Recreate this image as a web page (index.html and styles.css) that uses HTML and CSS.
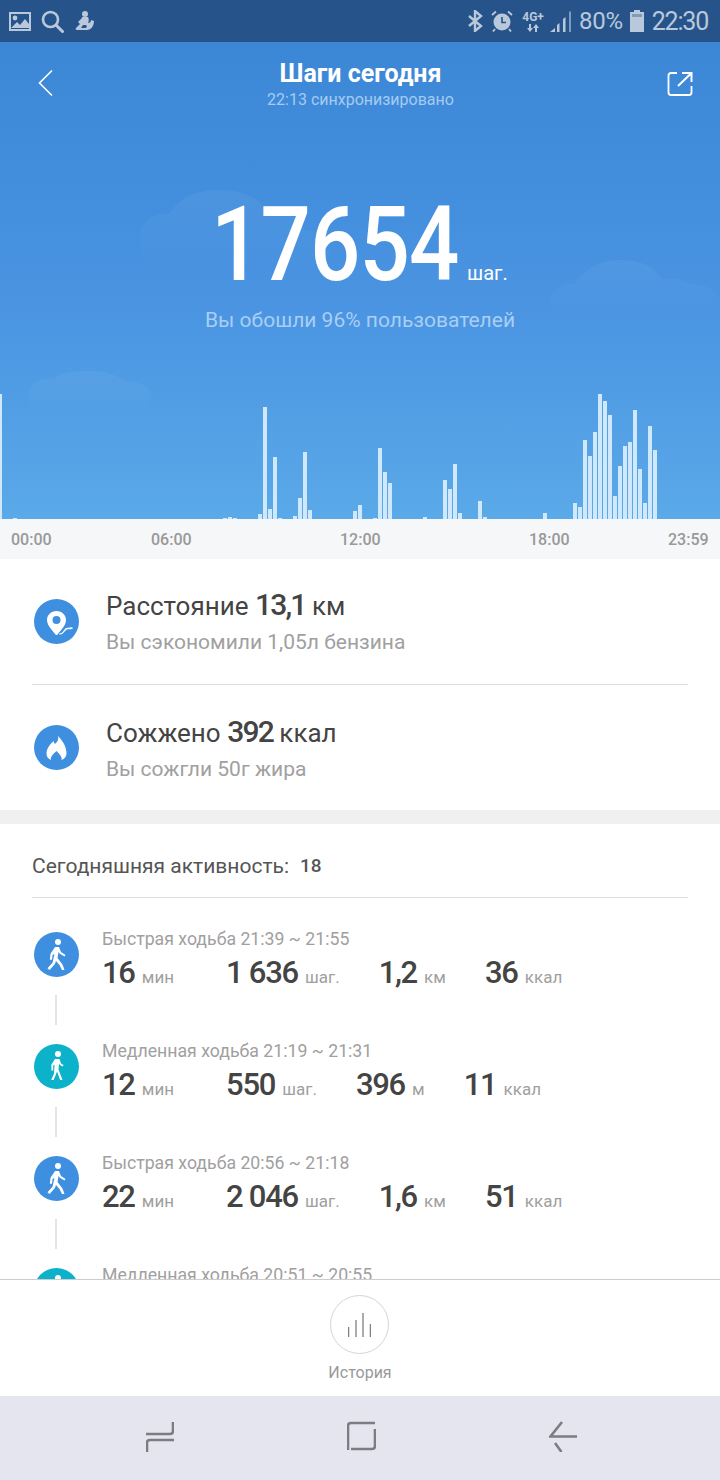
FILE: index.html
```html
<!DOCTYPE html>
<html lang="ru">
<head>
    <meta charset="UTF-8">
    <title>Шаги сегодня</title>
    <link rel="stylesheet" href="styles.css">
</head>
<body>
<div class="phone">
    <div class="status-bar">
        <div class="status-group">
            <svg class="st-icon" width="22" height="20" viewBox="0 0 22 20"><path fill="#b9c8db" fill-rule="evenodd" d="M0 1h22v19H0zM2 3v15h18V3z"/><path fill="#b9c8db" d="M2 17l6-6 3 3 5-6 4 5v4H2z"/><circle cx="6" cy="7" r="2.4" fill="#b9c8db"/></svg>
            <svg class="st-icon st-search" width="23" height="23" viewBox="0 0 23 23"><circle cx="9.500" cy="9.500" r="7.500" fill="none" stroke="#b9c8db" stroke-width="2.600"/><path d="M15 15l6.500 6.500" stroke="#b9c8db" stroke-width="3" stroke-linecap="round"/></svg>
            <svg class="st-icon st-figure" width="19" height="20" viewBox="0 0 19 20"><circle cx="10" cy="3" r="3" fill="#b9c8db"/><path fill="#b9c8db" fill-rule="evenodd" d="M7 6h6c1 2 1 4 0 6 2 0 3-1 3-3l3 1c0 5-3 9-7 9H2c-1 0-2-1-1-2l4-4-2-2 3-3c1-1 1-1 1-2zm1 8l-2 3h5c1-1 1-2 0-3z"/></svg>
        </div>
        <div class="status-group">
            <svg class="st-icon st-bt" width="15" height="22" viewBox="0 0 15 22"><path d="M1 6l12 10-6 5V1l6 5L1 16" fill="none" stroke="#b9c8db" stroke-width="2.400"/></svg>
            <svg class="st-icon st-alarm" width="22" height="22" viewBox="0 0 22 22"><circle cx="11" cy="12" r="8.500" fill="#b9c8db"/><path d="M11 7v5.500h4" fill="none" stroke="#26548a" stroke-width="1.600"/><path d="M1 5l4-3.500M21 5l-4-3.500M4 19l-2 2.500M18 19l2 2.500" stroke="#b9c8db" stroke-width="1.800"/></svg>
            <div class="st-net">
                4G+
                <svg class="st-arrows" width="14" height="8" viewBox="0 0 14 8"><path fill="#b9c8db" d="M3 0h2v4h2L4 8 1 4h2zM9 8h2V4h2l-3-4-3 4h2z"/></svg>
            </div>
            <svg class="st-icon st-signal" width="21" height="21" viewBox="0 0 21 21"><path fill="#b9c8db" d="M0 21l5-4v4zM7 14l2.500-2v9H7zM13 8l2.500-2v15H13z"/><path fill="#7f9bbd" d="M19 1l2-1v21h-2z"/></svg>
            <span class="st-percent">80%</span>
            <svg class="st-icon st-battery" width="14" height="22" viewBox="0 0 14 22"><path fill="#b9c8db" d="M4 0h6v2h4v20H0V2h4z"/><path fill="#7f9bbd" d="M2 4h10v3H2z"/></svg>
            <span class="st-time">22:30</span>
        </div>
    </div>

    <div class="content">
        <section class="hero">
            <!-- clouds behind the number -->
            <svg class="cloud cloud-a" width="190" height="80" viewBox="0 0 190 80">
                <defs>
                    <linearGradient id="cloud-fade" x1="0" y1="0" x2="0" y2="1">
                        <stop offset="0" stop-color="#fff" stop-opacity=".05"/>
                        <stop offset="1" stop-color="#fff" stop-opacity="0"/>
                    </linearGradient>
                </defs>
                <path fill="url(#cloud-fade)" d="M0 48c0-16 14-26 30-24 8-16 26-24 50-24 22 0 38 8 46 20 6-2 14-2 20 0 10 4 16 12 18 20 14 2 26 10 26 24 0 10-6 16-14 16H18C6 80 0 62 0 48z"/>
            </svg>
            <svg class="cloud cloud-b" width="170" height="60" viewBox="0 0 170 60"><path fill="url(#cloud-fade)" d="M0 42c0-12 12-20 26-18 6-14 24-24 46-24 20 0 34 8 40 20 8-2 20-2 28 4 14 0 30 6 30 20 0 8-6 16-14 16H16C6 60 0 52 0 42z"/></svg>
            <svg class="cloud cloud-c" width="122" height="42" viewBox="0 0 122 42"><path fill="url(#cloud-fade)" d="M0 24C0 14 10 6 24 8 30 2 44 0 60 0c16 0 28 3 34 10 14 0 28 4 28 16 0 10-6 16-16 16H14C4 42 0 32 0 24z"/></svg>

            <header class="top-bar">
                <svg class="back-icon" width="16" height="28" viewBox="0 0 16 28"><path d="M14 1.500L1.500 14 14 26.500" fill="none" stroke="#fff" stroke-width="1.600"/></svg>
                <div class="top-title">
                    <div class="top-name">Шаги сегодня</div>
                    <div class="top-sync">22:13 синхронизировано</div>
                </div>
                <svg class="share-icon" width="26" height="26" viewBox="0 0 26 26"><path d="M10 2H4C2.500 2 1.500 3 1.500 4.500v17C1.500 23 2.500 24 4 24h18c1.500 0 2.500-1 2.500-2.500V15" fill="none" stroke="#fff" stroke-width="1.800"/><path d="M11 15L24 2.500M15 2h9.500v9" fill="none" stroke="#fff" stroke-width="2"/></svg>
            </header>

            <div class="steps">
                <span class="steps-num">17654</span><span class="steps-unit">шаг.</span>
            </div>
            <div class="steps-note">Вы обошли 96% пользователей</div>

            <div class="chart" id="chart"></div>
        </section>

        <div class="axis">
            <span>00:00</span><span>06:00</span><span>12:00</span><span>18:00</span><span>23:59</span>
        </div>

        <section class="summary">
            <div class="summary-row">
                <div class="round-icon">
                    <svg width="45" height="45" viewBox="0 0 45 45"><path fill="#fff" fill-rule="evenodd" d="M22.500 12c-5.500 0-9.500 4-9.500 9 0 5.500 5.500 10.500 8.500 14.500.5.700 1.500.700 2 0 1-1.500 3-3.500 4.500-5.500 2.500-3 4-6 4-9 0-5-4-9-9.500-9zm0 5a4 4 0 1 1 0 8 4 4 0 0 1 0-8z"/><path d="M25.500 35c2 0 3-.500 4-2s2-3.500 4-3.500 3 0 5-.5" fill="none" stroke="#fff" stroke-width="1.300"/></svg>
                </div>
                <div>
                    <div class="summary-title">Расстояние <b>13,1</b> км</div>
                    <div class="summary-note">Вы сэкономили 1,05л бензина</div>
                </div>
            </div>
            <div class="summary-row">
                <div class="round-icon">
                    <svg width="45" height="45" viewBox="0 0 45 45"><path fill="#fff" d="M24 11c1 4-1 6-3 8-1-1-1.500-2-1.500-3-3 3-7 7-7 13 0 3 2 5 4.500 6-1-3 2-6 5.500-9 3 3 6 6 5 9 3-1 5-3.500 5-6.500 0-7-4-13-8.500-17.500z"/></svg>
                </div>
                <div>
                    <div class="summary-title">Сожжено <b>392</b> ккал</div>
                    <div class="summary-note">Вы сожгли 50г жира</div>
                </div>
            </div>
        </section>

        <section class="activity">
            <div class="activity-head">Сегодняшняя активность:<span class="activity-count">18</span></div>

            <div class="walk">
                <div class="walk-side">
                    <div class="round-icon">
                        <svg width="45" height="45" viewBox="0 0 45 45"><use href="#fast-walker"/></svg>
                    </div>
                    <div class="walk-line"></div>
                </div>
                <div class="walk-body">
                    <div class="walk-title">Быстрая ходьба 21:39 ~ 21:55</div>
                    <div class="walk-stats">
                        <span class="stat"><b>16</b> мин</span>
                        <span class="stat"><b>1 636</b> шаг.</span>
                        <span class="stat"><b>1,2</b> км</span>
                        <span class="stat"><b>36</b> ккал</span>
                    </div>
                </div>
            </div>

            <div class="walk">
                <div class="walk-side">
                    <div class="round-icon slow">
                        <svg width="45" height="45" viewBox="0 0 45 45"><use href="#slow-walker"/></svg>
                    </div>
                    <div class="walk-line"></div>
                </div>
                <div class="walk-body">
                    <div class="walk-title">Медленная ходьба 21:19 ~ 21:31</div>
                    <div class="walk-stats">
                        <span class="stat"><b>12</b> мин</span>
                        <span class="stat"><b>550</b> шаг.</span>
                        <span class="stat"><b>396</b> м</span>
                        <span class="stat"><b>11</b> ккал</span>
                    </div>
                </div>
            </div>

            <div class="walk">
                <div class="walk-side">
                    <div class="round-icon">
                        <svg width="45" height="45" viewBox="0 0 45 45"><use href="#fast-walker"/></svg>
                    </div>
                    <div class="walk-line"></div>
                </div>
                <div class="walk-body">
                    <div class="walk-title">Быстрая ходьба 20:56 ~ 21:18</div>
                    <div class="walk-stats">
                        <span class="stat"><b>22</b> мин</span>
                        <span class="stat"><b>2 046</b> шаг.</span>
                        <span class="stat"><b>1,6</b> км</span>
                        <span class="stat"><b>51</b> ккал</span>
                    </div>
                </div>
            </div>

            <div class="walk">
                <div class="walk-side">
                    <div class="round-icon slow">
                        <svg width="45" height="45" viewBox="0 0 45 45"><use href="#slow-walker"/></svg>
                    </div>
                </div>
                <div class="walk-body">
                    <div class="walk-title">Медленная ходьба 20:51 ~ 20:55</div>
                </div>
            </div>
        </section>
    </div>

    <footer class="history">
        <div class="history-btn">
            <svg width="23" height="24" viewBox="0 0 23 24"><path d="M.6 24V14M8 24V7M15 24V0M22.400 24V11" stroke="#808080" stroke-width="1.300" fill="none"/></svg>
        </div>
        <div class="history-label">История</div>
    </footer>

    <nav class="nav-bar">
        <svg width="28" height="31" viewBox="0 0 28 31"><path d="M27 0v9c0 2-1 3-3 3H0" fill="none" stroke="#7c7d83" stroke-width="2.600" transform="translate(0 1)"/><path d="M28 19H4c-2 0-3 1-3 3v9" fill="none" stroke="#7c7d83" stroke-width="2.600"/></svg>
        <svg width="29" height="30" viewBox="0 0 29 30"><path d="M28 2H4C2 2 1 3 1 5v24M4 28h21c2 0 3-1 3-3V8" fill="none" stroke="#7c7d83" stroke-width="2.600"/></svg>
        <svg width="28" height="31" viewBox="0 0 28 31"><path d="M13 1L1.500 15.500H28M6 22l6.500 9" fill="none" stroke="#7c7d83" stroke-width="2.600"/></svg>
    </nav>
</div>

<svg class="defs" width="0" height="0">
    <defs>
        <g id="fast-walker" fill="#fff">
            <circle cx="24" cy="10" r="3"/>
            <path d="M21 15h4l2 5 4.500 3-1 1.500-5-3-1-1.500-1 6 5 6.500 2 5.500H28l-2.500-5-3.500-4-1 3-5.500 6-2-1.700 5-5.500 2-9-2 1.500-.5 4.500h-2.200l.7-6z"/>
        </g>
        <g id="slow-walker" fill="#fff">
            <circle cx="24" cy="10" r="3"/>
            <path d="M21 15h4.500l1.500 4.500 2.500 1.500-.7 1.500-3-1.500-.8-1.500-.5 6 4 10.500h-2.300L23 27.500l-1.500 4-2 4.500h-2.300l2.800-6.500.5-9-1.300 1v5h-1.800v-6z"/>
        </g>
    </defs>
</svg>

<script>
    // bar heights by 10 minute slot, slots not listed are empty
    const bars = {3:1,45:1,46:2,47:1,52:5,53:112,54:10,55:62,56:1,59:3,60:21,61:67,62:9,71:8,72:14,75:1,76:71,77:47,78:36,85:2,89:39,90:30,91:55,92:6,96:18,97:2,109:6,115:16,116:12,117:79,118:63,119:87,120:125,121:118,122:104,123:23,124:53,125:73,126:77,127:109,128:50,129:16,130:93,131:69};
    const chart = document.getElementById('chart');
    for (let i = 0; i < 132; i++) {
        const bar = document.createElement('div');
        bar.className = 'bar';
        bar.style.height = (bars[i] || 0) + 'px';
        chart.appendChild(bar);
    }
</script>
</body>
</html>
```

FILE: styles.css
```css
* {
    box-sizing: border-box;
}

body {
    margin: 0;
    font-family: Roboto, 'Noto Sans', sans-serif;
    color: #444;
    background-color: #fff;
}

b {
    font-weight: 500;
}

.phone {
    width: 720px;
    height: 1480px;
    display: flex;
    flex-direction: column;
    overflow: hidden;
}

.defs {
    display: none;
}

/* status bar */
.status-bar {
    height: 42px;
    flex: none;
    padding: 0 12px 0 9px;
    display: flex;
    justify-content: space-between;
    align-items: center;
    background-color: #26548a;
    color: #b9c8db;
}

.status-group {
    display: flex;
    align-items: center;
}

.st-search {
    margin-left: 10px;
}

.st-figure {
    margin-left: 11px;
}

.st-alarm {
    margin-left: 8px;
}

.st-net {
    width: 22px;
    margin-left: 9px;
    font-size: 12px;
    font-weight: 700;
    line-height: 12px;
    text-align: center;
}

.st-arrows {
    display: block;
    margin: 1px auto 0;
}

.st-signal {
    margin-left: 6px;
}

.st-percent {
    margin-left: 8px;
    font-size: 24px;
    letter-spacing: -0.3px;
}

.st-battery {
    margin-left: 7px;
}

.st-time {
    margin-left: 8px;
    font-size: 25px;
    letter-spacing: -1.2px;
}

.content {
    flex: 1;
    min-height: 0;
    overflow: hidden;
}

/* blue part */
.hero {
    position: relative;
    height: 477px;
    display: flex;
    flex-direction: column;
    align-items: center;
    background: linear-gradient(#3b87d6, #4a94e2 55%, #5aa9e8);
    color: #fff;
}

.cloud {
    position: absolute;
}

.cloud-a {
    left: 140px;
    top: 148px;
}

.cloud-b {
    left: 550px;
    top: 218px;
}

.cloud-c {
    left: 29px;
    top: 329px;
}

.top-bar {
    position: relative;
    width: 100%;
    padding: 16px 27px 0 38px;
    display: flex;
    justify-content: space-between;
}

.back-icon {
    margin-top: 11px;
}

.share-icon {
    margin-top: 13px;
}

.top-title {
    text-align: center;
}

.top-name {
    font-size: 25px;
    font-weight: 700;
    line-height: 30px;
    margin-top: 1px;
}

.top-sync {
    font-size: 16px;
    line-height: 22px;
    color: #a5cbf2;
}

.steps {
    position: relative;
    margin-top: 90px;
    height: 88px;
    width: 100%;
    padding-left: 211px;
    display: flex;
    align-items: flex-end;
}

.steps-num {
    font-size: 103px;
    font-weight: 500;
    line-height: 88px;
    width: 256px;
    letter-spacing: -1px;
    transform: scaleX(.86);
    transform-origin: left bottom;
}

.steps-unit {
    font-size: 20px;
    line-height: 20px;
    margin-bottom: 6px;
}

.steps-note {
    position: relative;
    margin-top: 19px;
    font-size: 21px;
    color: #a8cff3;
}

.chart {
    position: absolute;
    left: -2px;
    bottom: 0;
    display: flex;
    align-items: flex-end;
    gap: 1px;
}

.bar {
    width: 4px;
    background-color: #cfe8fb;
}

.bar:first-child {
    height: 125px !important;
}

/* time line under the chart */
.axis {
    height: 40px;
    padding: 0 11px;
    display: grid;
    grid-template-columns: 140px 189px 189px 139px auto;
    align-items: center;
    background-color: #f5f7f9;
    color: #999;
    font-size: 16px;
    font-weight: 500;
}

/* distance and calories */
.summary {
    padding: 0 32px;
    border-bottom: 14px solid #f0f0f0;
}

.summary-row {
    height: 125px;
    padding-left: 2px;
    display: flex;
    align-items: center;
    gap: 27px;
}

.summary-row:first-child {
    height: 126px;
    padding-bottom: 1px;
    border-bottom: 1px solid #ddd;
}

.round-icon {
    width: 45px;
    height: 45px;
    flex: none;
    border-radius: 50%;
    background-color: #3f8fe0;
}

.round-icon.slow {
    background-color: #0cb1ca;
}

.summary-title {
    font-size: 26px;
    line-height: 34px;
    margin-top: 1px;
}

.summary-title b {
    font-size: 30px;
    letter-spacing: -1.800px;
}

.summary-note {
    margin-top: 6px;
    font-size: 21px;
    line-height: 26px;
    color: #a0a0a0;
}

/* activity list */
.activity {
    padding: 0 32px;
}

.activity-head {
    height: 74px;
    padding-top: 10px;
    display: flex;
    align-items: center;
    border-bottom: 1px solid #ddd;
    font-size: 21px;
    color: #555;
    margin-bottom: 34px;
}

.activity-count {
    margin-left: 11px;
    font-size: 19px;
    font-weight: 500;
}

.walk {
    height: 112px;
    display: flex;
    padding-left: 2px;
}

.walk-side {
    width: 68px;
    flex: none;
}

.walk-line {
    width: 2px;
    height: 30px;
    margin: 18px 0 0 21px;
    background-color: #e5e5e5;
}

.walk-body {
    margin-top: -5px;
}

.walk-title {
    font-size: 17.700px;
    line-height: 24px;
    color: #a0a0a0;
}

.walk-stats {
    display: flex;
    align-items: baseline;
    margin-top: 4px;
    font-size: 17px;
    color: #a0a0a0;
    line-height: 36px;
}

.stat {
    margin-right: 39px;
}

.stat:first-child {
    margin-right: 52px;
}

.stat b {
    font-size: 31px;
    color: #444;
    margin-right: 3px;
    letter-spacing: -1.300px;
}

/* history button */
.history {
    height: 117px;
    flex: none;
    display: flex;
    flex-direction: column;
    align-items: center;
    padding-top: 15px;
    border-top: 1px solid #ccc;
    background-color: #fff;
}

.history-btn {
    width: 59px;
    height: 59px;
    margin-right: 1px;
    display: flex;
    align-items: center;
    justify-content: center;
    border: 1px solid #d5d5d5;
    border-radius: 50%;
}

.history-label {
    margin-top: 9px;
    font-size: 16px;
    color: #999;
}

/* android buttons */
.nav-bar {
    height: 84px;
    flex: none;
    padding: 25px 143px 0 146px;
    display: flex;
    justify-content: space-between;
    align-items: flex-start;
    background-color: #e4e5ef;
}
```
